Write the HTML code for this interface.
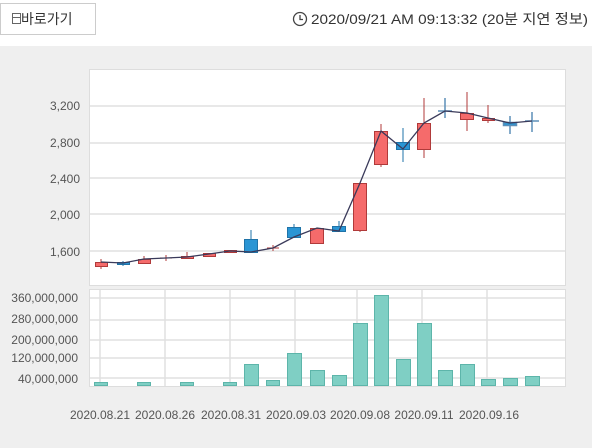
<!DOCTYPE html>
<html><head><meta charset="utf-8"><style>
html,body{margin:0;padding:0;background:#fff;width:600px;height:448px;overflow:hidden;font-family:"Liberation Sans","Noto Sans CJK KR",sans-serif}
</style></head><body>
<svg width="600" height="448" xmlns="http://www.w3.org/2000/svg" style="position:absolute;left:0;top:0;font-family:'Liberation Sans','Noto Sans CJK KR',sans-serif">
<rect x="0" y="0" width="600" height="448" fill="#fff"/>
<rect x="0.5" y="3.5" width="95" height="31" fill="#fff" stroke="#ccc"/>
<rect x="12.5" y="13.5" width="8" height="10" fill="none" stroke="#666"/>
<line x1="12" y1="17.5" x2="21" y2="17.5" stroke="#666"/>
<text x="21" y="24" font-size="14" fill="#333">바로가기</text>
<circle cx="300" cy="19" r="6.5" fill="none" stroke="#444" stroke-width="1.3"/>
<path d="M300 15v4.5h3" fill="none" stroke="#444" stroke-width="1.3"/>
<text x="311" y="24" font-size="14" fill="#333" textLength="277" lengthAdjust="spacingAndGlyphs">2020/09/21 AM 09:13:32 (20분 지연 정보)</text>
<rect x="0" y="46" width="592" height="402" fill="#efefef"/>
<rect x="89.5" y="69.5" width="476" height="216" fill="#fff" stroke="#ddd"/>
<rect x="89.5" y="289.5" width="476" height="97" fill="#fff" stroke="#ddd"/>
<g stroke="#e0e0e0" stroke-width="1.5">
<line x1="90" y1="106" x2="565" y2="106"/><line x1="90" y1="143" x2="565" y2="143"/>
<line x1="90" y1="178" x2="565" y2="178"/><line x1="90" y1="214" x2="565" y2="214"/>
<line x1="90" y1="251" x2="565" y2="251"/>
<line x1="90" y1="298" x2="565" y2="298"/><line x1="90" y1="320" x2="565" y2="320"/>
<line x1="90" y1="340" x2="565" y2="340"/><line x1="90" y1="358" x2="565" y2="358"/>
<line x1="90" y1="378" x2="565" y2="378"/>
<line x1="100" y1="290" x2="100" y2="386"/><line x1="165" y1="290" x2="165" y2="386"/>
<line x1="230" y1="290" x2="230" y2="386"/><line x1="295" y1="290" x2="295" y2="386"/>
<line x1="357" y1="290" x2="357" y2="386"/><line x1="422" y1="290" x2="422" y2="386"/>
<line x1="487" y1="290" x2="487" y2="386"/>
</g>
<g font-size="12" fill="#555" text-anchor="end">
<text x="80" y="110">3,200</text><text x="80" y="147">2,800</text><text x="80" y="183">2,400</text>
<text x="80" y="219">2,000</text><text x="80" y="256">1,600</text>
<text x="78" y="302">360,000,000</text><text x="78" y="323">280,000,000</text>
<text x="78" y="344">200,000,000</text><text x="78" y="362">120,000,000</text>
<text x="78" y="383">40,000,000</text>
</g>
<g font-size="12" fill="#555" text-anchor="middle">
<text x="100" y="419">2020.08.21</text><text x="165" y="419">2020.08.26</text>
<text x="231" y="419">2020.08.31</text><text x="296" y="419">2020.09.03</text>
<text x="360" y="419">2020.09.08</text><text x="424" y="419">2020.09.11</text>
<text x="489" y="419">2020.09.16</text>
</g>
<!-- volume bars -->
<g fill="#7fcfc4" stroke="#5db5aa">
<rect x="94.5" y="382.5" width="13" height="3"/><rect x="137.5" y="382.5" width="13" height="3"/>
<rect x="180.5" y="382.5" width="13" height="3"/><rect x="223.5" y="382.5" width="13" height="3"/>
<rect x="244.5" y="364.5" width="14" height="21"/><rect x="266.5" y="380.5" width="13" height="5"/>
<rect x="287.5" y="353.5" width="14" height="32"/><rect x="310.5" y="370.5" width="14" height="15"/>
<rect x="332.5" y="375.5" width="14" height="10"/><rect x="353.5" y="323.5" width="14" height="62"/>
<rect x="374.5" y="295.5" width="14" height="90"/><rect x="396.5" y="359.5" width="14" height="26"/>
<rect x="417.5" y="323.5" width="14" height="62"/><rect x="438.5" y="370.5" width="14" height="15"/>
<rect x="460.5" y="364.5" width="14" height="21"/><rect x="481.5" y="379.5" width="14" height="6"/>
<rect x="503.5" y="378.5" width="14" height="7"/><rect x="525.5" y="376.5" width="14" height="9"/>
</g>
<!-- candles -->
<g stroke="#b03a3a" fill="#f56b6b">
<line x1="101" y1="259" x2="101" y2="269"/><rect x="95.5" y="262.5" width="12" height="4"/>
<line x1="144" y1="256" x2="144" y2="263"/><rect x="138.5" y="259.5" width="12" height="4"/>
<line x1="166" y1="255" x2="166" y2="261"/><line x1="160" y1="258" x2="172" y2="258"/>
<line x1="187" y1="252" x2="187" y2="259"/><rect x="181.5" y="256.5" width="12" height="2"/>
<rect x="203.5" y="253.5" width="12" height="3"/>
<rect x="224.5" y="250.5" width="12" height="2"/>
<line x1="273" y1="245" x2="273" y2="251"/><line x1="267" y1="248" x2="279" y2="248"/>
<rect x="310.5" y="228.5" width="13" height="15"/>
<line x1="360" y1="183" x2="360" y2="232"/><rect x="353.5" y="183.5" width="13" height="47"/>
<line x1="381" y1="124" x2="381" y2="167"/><rect x="374.5" y="131.5" width="13" height="33"/>
<line x1="424" y1="98" x2="424" y2="158"/><rect x="417.5" y="123.5" width="13" height="26"/>
<line x1="467" y1="92" x2="467" y2="131"/><rect x="460.5" y="113.5" width="13" height="6"/>
<line x1="488" y1="105" x2="488" y2="123"/><rect x="482.5" y="118.5" width="12" height="2"/>
</g>
<g stroke="#1f73a8" fill="#2a95d4">
<line x1="123" y1="261" x2="123" y2="266"/><rect x="117.5" y="262.5" width="12" height="2"/>
<line x1="251" y1="230" x2="251" y2="252"/><rect x="244.5" y="239.5" width="13" height="13"/>
<line x1="294" y1="224" x2="294" y2="237"/><rect x="287.5" y="227.5" width="13" height="10"/>
<line x1="339" y1="221" x2="339" y2="231"/><rect x="332.5" y="226.5" width="13" height="5"/>
<line x1="403" y1="128" x2="403" y2="162"/><rect x="396.5" y="142.5" width="13" height="7"/>
</g>
<g stroke="#5c8fb8" stroke-width="1.5">
<line x1="445" y1="98" x2="445" y2="118"/><line x1="438" y1="111" x2="452" y2="111"/>
<line x1="510" y1="116" x2="510" y2="134"/><rect x="503.5" y="122.5" width="13" height="3" fill="#2a95d4"/>
<line x1="532" y1="112" x2="532" y2="132"/><line x1="525" y1="121" x2="539" y2="121"/>
</g>
<polyline fill="none" stroke="#3a3a5a" stroke-width="1.3" points="101,262 123,263 144,259 166,258 187,257 209,254 230,251 251,252 273,248 294,237 317,228 339,231 360,183 381,131 403,149 424,123 445,111 467,113 488,118 510,123 532,121"/>
</svg>
</body></html>
